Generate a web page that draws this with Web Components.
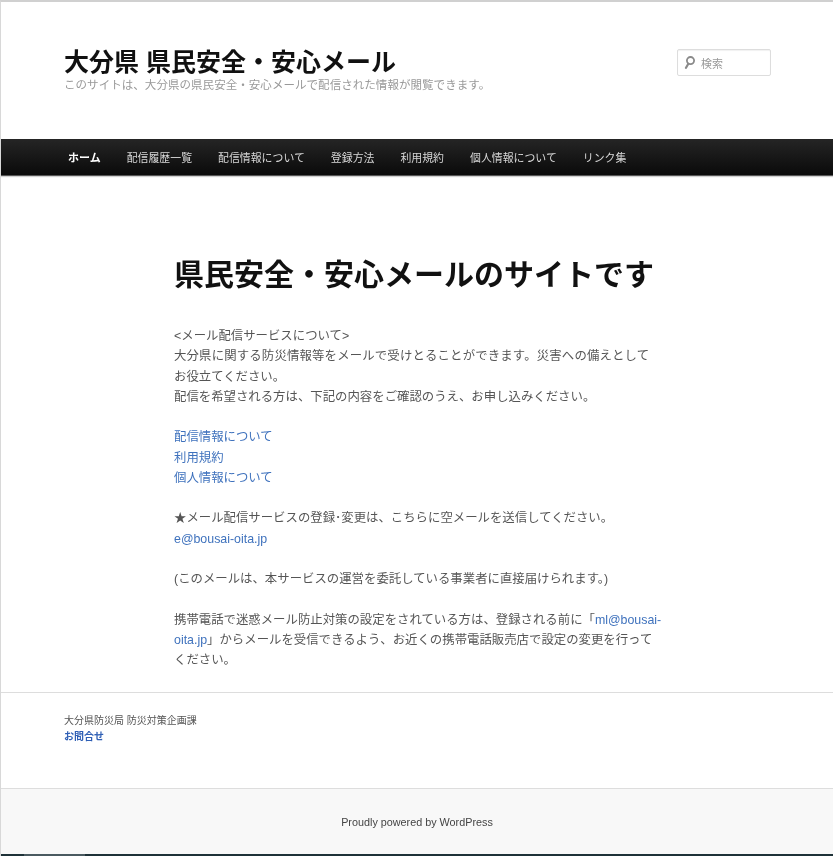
<!DOCTYPE html>
<html lang="ja">
<head>
<meta charset="utf-8">
<title>大分県 県民安全・安心メール</title>
<style>
  html, body { margin: 0; padding: 0; background: #fff; }
  body { font-family: "Liberation Sans", "Noto Sans CJK JP", sans-serif; color: #373737; }
</style>
</head>
<body>
<site-page>
  <site-header slot="header" name="大分県 県民安全・安心メール" tagline="このサイトは、大分県の県民安全・安心メールで配信された情報が閲覧できます。"></site-header>
  <site-nav slot="nav">
    <a class="on">ホーム</a>
    <a>配信履歴一覧</a>
    <a>配信情報について</a>
    <a>登録方法</a>
    <a>利用規約</a>
    <a>個人情報について</a>
    <a>リンク集</a>
  </site-nav>
  <site-article slot="main"></site-article>
  <site-widgets slot="widgets"></site-widgets>
  <site-credit slot="credit"></site-credit>
</site-page>

<script>
class SitePage extends HTMLElement {
  constructor() {
    super();
    this.attachShadow({ mode: 'open' });
    this.shadowRoot.innerHTML = `
      <style>
        :host {
          display: flex;
          flex-direction: column;
          height: 856px;
          overflow: hidden;
          box-sizing: border-box;
          border-top: 2px solid #d0d0d0;
          border-left: 1px solid #d8d8d8;
          background: #fff;
          filter: blur(0.3px);
        }
        .strip {
          margin-top: auto;
          height: 2px;
          margin-left: -1px;
          background: linear-gradient(to right, #1e3238 24px, #4a5a60 24px, #4a5a60 85px, #1e3238 85px);
        }
      </style>
      <slot name="header"></slot>
      <slot name="nav"></slot>
      <slot name="main"></slot>
      <slot name="widgets"></slot>
      <slot name="credit"></slot>
      <div class="strip"></div>
    `;
  }
}

class SiteHeader extends HTMLElement {
  constructor() {
    super();
    this.attachShadow({ mode: 'open' });
    this.shadowRoot.innerHTML = `
      <style>
        :host {
          display: flex;
          justify-content: space-between;
          align-items: flex-start;
          height: 137px;
          box-sizing: border-box;
          padding: 44px 62px 0 63px;
          font-family: "Liberation Sans", "Noto Sans CJK JP", sans-serif;
        }
        h1 {
          margin: 0;
          font-size: 25px;
          line-height: 32px;
          font-weight: 700;
          color: #111;
        }
        p {
          margin: 0;
          font-size: 11.5px;
          line-height: 14px;
          letter-spacing: 0.05px;
          color: #999;
        }
        .search {
          display: flex;
          align-items: center;
          gap: 6px;
          width: 94px;
          height: 27px;
          margin-top: 3px;
          box-sizing: border-box;
          padding-left: 6px;
          border: 1px solid #ddd;
          border-radius: 2px;
          box-shadow: inset 0 1px 1px rgba(0,0,0,.06);
          font-size: 11px;
          color: #999;
        }
        svg { display: block; }
      </style>
      <div>
        <h1></h1>
        <p></p>
      </div>
      <div class="search">
        <svg width="11" height="13" viewBox="0 0 11 13">
          <circle cx="6.5" cy="4.6" r="3.6" fill="none" stroke="#8a8a8a" stroke-width="1.8"/>
          <path d="M4.2 8 L2 11.8" stroke="#8a8a8a" stroke-width="2.2" stroke-linecap="round"/>
        </svg>
        <span>検索</span>
      </div>
    `;
    this.shadowRoot.querySelector('h1').textContent = this.getAttribute('name');
    this.shadowRoot.querySelector('p').textContent = this.getAttribute('tagline');
  }
}

class SiteNav extends HTMLElement {
  constructor() {
    super();
    this.attachShadow({ mode: 'open' });
    this.shadowRoot.innerHTML = `
      <style>
        :host {
          display: flex;
          align-items: center;
          gap: 26px;
          height: 37px;
          box-sizing: border-box;
          padding: 0 0 0 67px;
          background: linear-gradient(#252525, #0a0a0a);
          border-bottom: 1px solid #555;
          box-shadow: 0 1px 1px rgba(0,0,0,.18);
          font-family: "Liberation Sans", "Noto Sans CJK JP", sans-serif;
          font-size: 10.9px;
          color: #eee;
        }
        ::slotted(a) { color: #d8d8d8; white-space: nowrap; }
        ::slotted(a.on) { color: #fff; font-weight: 700; font-size: 11px; }
      </style>
      <slot></slot>
    `;
  }
}

class SiteArticle extends HTMLElement {
  constructor() {
    super();
    this.attachShadow({ mode: 'open' });
    this.shadowRoot.innerHTML = `
      <style>
        :host {
          display: block;
          height: 517px;
          box-sizing: border-box;
          padding: 79px 0 0 173px;
          border-bottom: 1px solid #ddd;
          font-family: "Liberation Sans", "Noto Sans CJK JP", sans-serif;
          font-size: 12.4px;
          line-height: 20.25px;
          color: #555;
        }
        h2 {
          margin: 0 0 31px;
          font-size: 30px;
          line-height: 40px;
          font-weight: 700;
          color: #111;
        }
        .body { width: 490px; }
        p { margin: 0 0 20.25px; }
        a { color: #3f72bd; text-decoration: none; }
        .wide { letter-spacing: 0.16px; }
      </style>
      <h2>県民安全・安心メールのサイトです</h2>
      <div class="body">
        <p>&lt;メール配信サービスについて&gt;<br>
        <span class="wide">大分県に関する防災情報等をメールで受けとることができます。災害への備えとして</span><br>
        お役立てください。<br>
        配信を希望される方は、下記の内容をご確認のうえ、お申し込みください。</p>
        <p><a>配信情報について</a><br>
        <a>利用規約</a><br>
        <a>個人情報について</a></p>
        <p>★メール配信サービスの登録･変更は、こちらに空メールを送信してください。<br>
        <a>e@bousai-oita.jp</a></p>
        <p>(このメールは、本サービスの運営を委託している事業者に直接届けられます。)</p>
        <p>携帯電話で迷惑メール防止対策の設定をされている方は、登録される前に「<a>ml@bousai-</a><br>
        <a>oita.jp</a>」からメールを受信できるよう、お近くの携帯電話販売店で設定の変更を行って<br>
        ください。</p>
      </div>
    `;
  }
}

class SiteWidgets extends HTMLElement {
  constructor() {
    super();
    this.attachShadow({ mode: 'open' });
    this.shadowRoot.innerHTML = `
      <style>
        :host {
          display: block;
          height: 96px;
          box-sizing: border-box;
          padding: 20px 0 0 63px;
          border-bottom: 1px solid #ddd;
          font-family: "Liberation Sans", "Noto Sans CJK JP", sans-serif;
          font-size: 10px;
          line-height: 16px;
          color: #555;
        }
        a { color: #2f5fb5; font-weight: 700; display: block; }
      </style>
      <div>大分県防災局 防災対策企画課</div>
      <a>お問合せ</a>
    `;
  }
}

class SiteCredit extends HTMLElement {
  constructor() {
    super();
    this.attachShadow({ mode: 'open' });
    this.shadowRoot.innerHTML = `
      <style>
        :host {
          display: flex;
          justify-content: center;
          align-items: center;
          height: 65px;
          background: #f8f8f8;
          font-family: "Liberation Sans", "Noto Sans CJK JP", sans-serif;
          font-size: 10.8px;
          color: #444;
        }
      </style>
      <span>Proudly powered by WordPress</span>
    `;
  }
}

customElements.define('site-page', SitePage);
customElements.define('site-header', SiteHeader);
customElements.define('site-nav', SiteNav);
customElements.define('site-article', SiteArticle);
customElements.define('site-widgets', SiteWidgets);
customElements.define('site-credit', SiteCredit);
</script>
</body>
</html>
